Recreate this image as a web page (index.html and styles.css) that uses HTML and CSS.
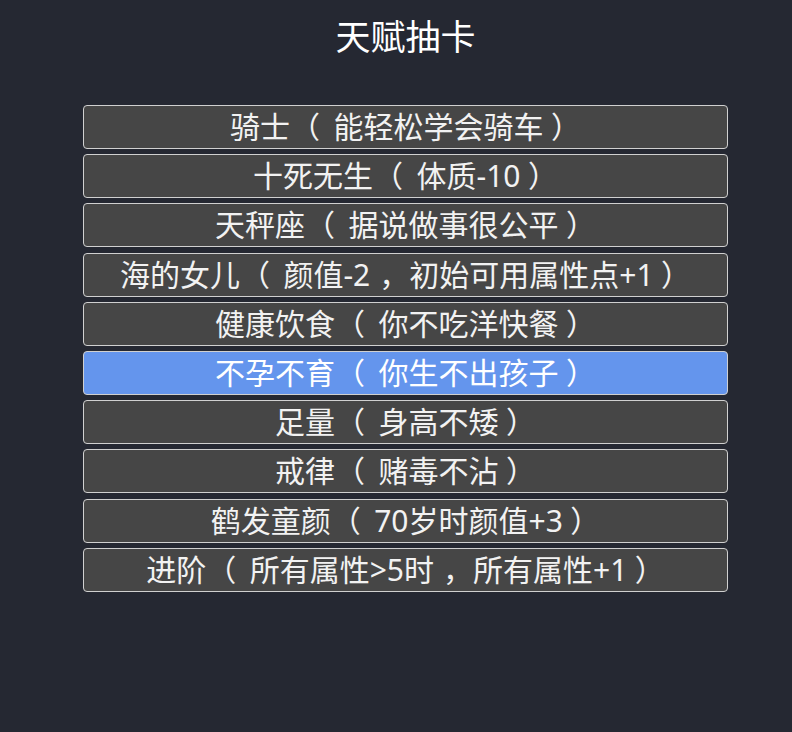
FILE: index.html
```html
<!DOCTYPE html>
<html lang="zh-CN">
<head>
  <meta charset="UTF-8">
  <meta name="viewport" content="width=device-width, initial-scale=1.0">
  <title>天赋抽卡</title>
  <link rel="stylesheet" href="styles.css">
</head>
<body>
<div class="page">
  <h1 class="title">天赋抽卡</h1>
  <ul class="talents">
    <li class="talent">骑士<span class="po">（</span>能轻松学会骑车<span class="pc">）</span></li>
    <li class="talent">十死无生<span class="po">（</span>体质-10<span class="pc">）</span></li>
    <li class="talent">天秤座<span class="po">（</span>据说做事很公平<span class="pc">）</span></li>
    <li class="talent">海的女儿<span class="po">（</span>颜值-2<span class="cm">，</span>初始可用属性点+1<span class="pc">）</span></li>
    <li class="talent">健康饮食<span class="po">（</span>你不吃洋快餐<span class="pc">）</span></li>
    <li class="talent selected">不孕不育<span class="po">（</span>你生不出孩子<span class="pc">）</span></li>
    <li class="talent">足量<span class="po">（</span>身高不矮<span class="pc">）</span></li>
    <li class="talent">戒律<span class="po">（</span>赌毒不沾<span class="pc">）</span></li>
    <li class="talent">鹤发童颜<span class="po">（</span>70岁时颜值+3<span class="pc">）</span></li>
    <li class="talent">进阶<span class="po">（</span>所有属性&gt;5时<span class="cm">，</span>所有属性+1<span class="pc">）</span></li>
  </ul>
</div>
</body>
</html>
```

FILE: styles.css
```css
html, body {
  margin: 0;
  height: 100%;
}

body {
  background: #252832;
  color: #f2f2f2;
  font-family: "Noto Sans", "Noto Sans CJK SC", sans-serif;
}

.page {
  width: 645px;
  margin-left: 83px;
  padding-top: 14px;
}

.title {
  margin: 0;
  font-size: 35px;
  font-weight: normal;
  line-height: 46px;
  text-align: center;
  color: #ffffff;
}

.talents {
  list-style: none;
  margin: 45px 0 0;
  padding: 0;
  display: flex;
  flex-direction: column;
  gap: 5.2px;
}

.talent {
  box-sizing: border-box;
  height: 44px;
  border: 1px solid #d0d0d0;
  border-radius: 4px;
  background: #464646;
  font-size: 30px;
  line-height: 42px;
  text-align: center;
  white-space: nowrap;
  cursor: pointer;
}

.talent.selected {
  background: #6495ed;
  color: #ffffff;
}

/* space the full-width punctuation so it sits mid-cell */
.po {
  padding-right: 0.45em;
}

.pc {
  padding-left: 0.25em;
}

.cm {
  padding-left: 0.3em;
}
```
